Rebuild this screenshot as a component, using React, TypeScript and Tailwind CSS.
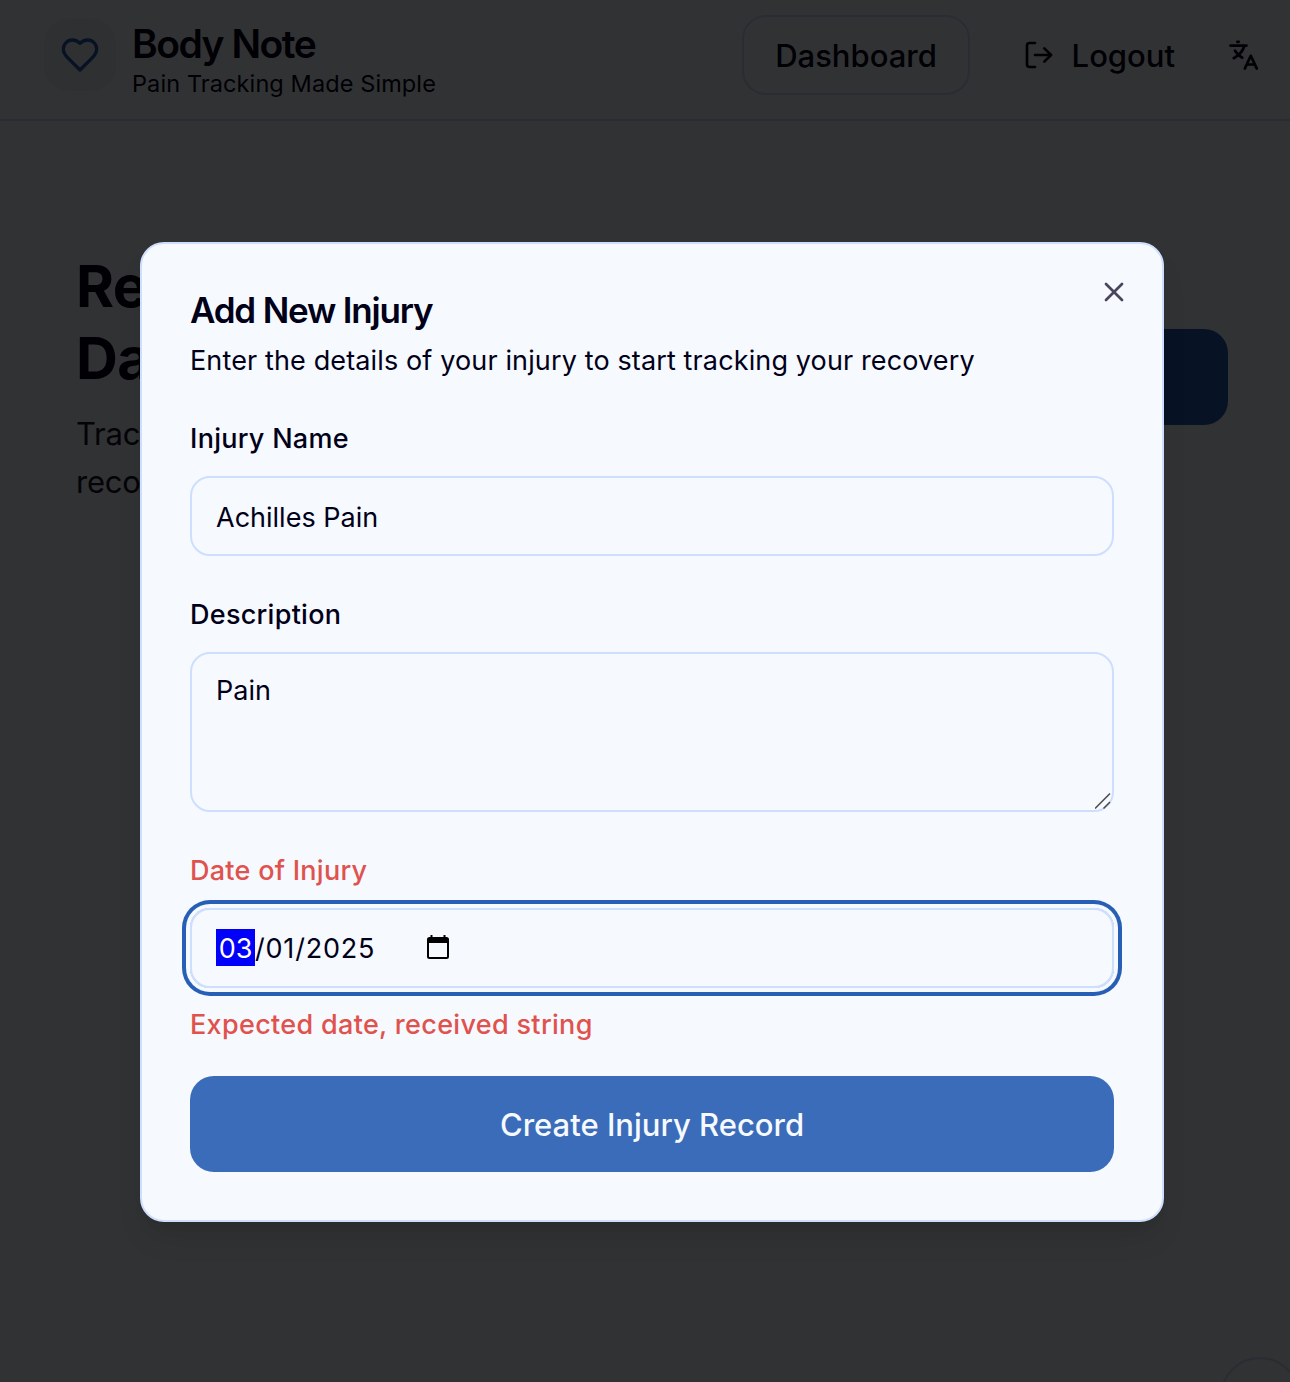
import { LogOut, X } from "lucide-react";
import type { ReactNode } from "react";

function HeartIcon() {
  return (
    <svg width="40" height="40" viewBox="0 0 24 24" fill="none" stroke="currentColor" strokeWidth="2" strokeLinecap="round" strokeLinejoin="round">
      <path d="M19 14c1.49-1.46 3-3.210 3-5.500A5.500 5.500 0 0 0 16.500 3c-1.760 0-3 .5-4.500 2-1.500-1.500-2.740-2-4.500-2A5.500 5.500 0 0 0 2 8.500c0 2.300 1.500 4.050 3 5.500l7 7Z" />
    </svg>
  );
}

function TranslateIcon() {
  return (
    <svg width="32" height="32" viewBox="0 0 32 32" fill="none" stroke="currentColor" strokeWidth="2.7" strokeLinecap="round" strokeLinejoin="round" className="shrink-0">
      <path d="M9.300 2.800h1.400M2.500 6.600h16M16 8C14.500 12.500 10.500 16.500 5.700 19.200M7 11.700c1.800 3 4 5.300 7.300 7M16.800 29.600 22.800 16.800l6 12.800M19 25.500h7.600" />
    </svg>
  );
}

function Header() {
  return (
    <header className="flex h-[121px] items-start border-b-2 border-[#d6d6ff] pl-11 text-[#000019]">
      <div className="mt-[19px] flex size-[72px] items-center justify-center rounded-3xl bg-[#ebeff5] text-[#235ab4]">
        <HeartIcon />
      </div>
      <div className="ml-4 mt-6 flex flex-col">
        <span className="h-10 w-fit text-[39px] leading-10 font-semibold tracking-[-1.5px] whitespace-nowrap">Body Note</span>
        <span className="h-10 w-fit text-[23.5px] leading-10 tracking-[0.1px] whitespace-nowrap">Pain Tracking Made Simple</span>
      </div>
      <div className="mt-[15px] ml-auto flex h-20 w-[228px] items-center justify-center rounded-3xl border-2 border-[#d6d6ff]">
        <span className="pt-0.5 text-[31px] font-medium">Dashboard</span>
      </div>
      <div className="mt-[15px] ml-[53px] flex h-20 w-[152px] items-center justify-between">
        <LogOut size={32} strokeWidth={2} />
        <span className="pt-0.5 text-[31px] font-medium">Logout</span>
      </div>
      <div className="mt-[15px] mr-[30px] ml-[53px] flex h-20 items-center">
        <TranslateIcon />
      </div>
    </header>
  );
}

function Field({ label, error, children }: { label: string; error?: boolean; children: ReactNode }) {
  return (
    <div className="flex flex-col">
      <div className={error ? "flex h-7 text-[#e0524d]" : "flex h-7"}>
        <span className="pt-px text-[27px] leading-7 font-medium tracking-[0.27px]">{label}</span>
      </div>
      <div className="mt-6 flex flex-col">{children}</div>
    </div>
  );
}

function AddInjuryDialog() {
  return (
    <div className="absolute top-[242px] left-[140px] flex h-[980px] w-[1024px] flex-col rounded-3xl border-2 border-[#cedffd] bg-[#f6f9fe] px-12 text-[#000019] shadow-[0_20px_30px_-6px_rgba(0,0,0,0.1),0_8px_12px_-8px_rgba(0,0,0,0.1)]">
      <X size={32} strokeWidth={2} className="absolute top-8 right-8 text-[#47465c]" />
      <h2 className="mt-12 h-9 w-fit text-[35px] leading-9 font-semibold tracking-[-1.2px]">Add New Injury</h2>
      <p className="mt-[13px] h-10 w-fit text-[27px] leading-10 tracking-[0.13px] whitespace-nowrap">Enter the details of your injury to start tracking your recovery</p>
      <div className="mt-[43px] flex flex-col gap-11">
        <Field label="Injury Name">
          <div className="flex h-20 items-center rounded-[20px] border-2 border-[#cedffd] px-6">
            <span className="pt-1 text-[27px]">Achilles Pain</span>
          </div>
        </Field>
        <Field label="Description">
          <div className="relative flex h-40 rounded-[20px] border-2 border-[#cedffd] px-6 pt-[17px]">
            <span className="text-[27px] leading-10">Pain</span>
            <svg className="absolute right-px bottom-px" width="16" height="16" viewBox="0 0 16 16" stroke="#4a4a4a" strokeWidth="1.5">
              <path d="M0 15.500 15 .5M8.500 15.500l6.500-6.500" />
            </svg>
          </div>
        </Field>
        <Field label="Date of Injury" error>
          <div className="flex h-20 items-center rounded-[20px] border-2 border-[#cedffd] px-6 ring-4 ring-[#275fb6] ring-offset-4 ring-offset-[#f6f9fe]">
            <span className="flex items-center text-[27px]">
              <span className="flex h-[37px] w-[39px] -translate-y-px items-center justify-center bg-[#0000fb] pt-1 text-white">03</span>
              <span className="pt-[3px] tracking-[0.8px]">/01/2025</span>
            </span>
            <svg className="mb-0.5 ml-[51px]" width="24" height="26" viewBox="0 0 24 26" fill="none" stroke="#000">
              <rect x="2" y="4" width="20" height="20" rx="1.500" strokeWidth="2" />
              <path d="M2 6.500h20" strokeWidth="5" />
              <path d="M5.500 1v4M18.500 1v4" strokeWidth="2" />
            </svg>
          </div>
        </Field>
      </div>
      <p className="mt-[17px] h-10 w-fit text-[27px] leading-10 font-medium tracking-[0.32px] text-[#e0524d]">Expected date, received string</p>
      <button className="mt-[31px] flex h-24 items-center justify-center rounded-3xl bg-[#3b6cb9] text-[31px] font-medium text-[#f6f9fe]">
        <span className="pt-0.5">Create Injury Record</span>
      </button>
    </div>
  );
}

export default function App() {
  return (
    <div className="relative h-[1382px] w-[1290px] overflow-hidden bg-[#f6f9fe] font-['Inter',sans-serif]">
      <Header />
      <main className="flex items-start justify-between pr-[62px] pl-[76px] text-[#000019]">
        <div className="mt-[129px]">
          <h1 className="w-[420px] text-[58px] leading-[72px] font-bold tracking-[-0.7px]">Recovery Dashboard</h1>
          <p className="mt-4 w-[420px] text-[31px] leading-[48px] tracking-[-0.2px] text-[#15152c]">Track and manage your recovery journey</p>
        </div>
        <div className="mt-[208px] h-24 w-[300px] rounded-3xl bg-[#235eb4]" />
      </main>
      <div className="absolute top-[1357px] left-[1220px] size-20 rounded-full border-2 border-[#d6d6ff]" />
      <div className="absolute inset-0 bg-black/80" />
      <AddInjuryDialog />
    </div>
  );
}
